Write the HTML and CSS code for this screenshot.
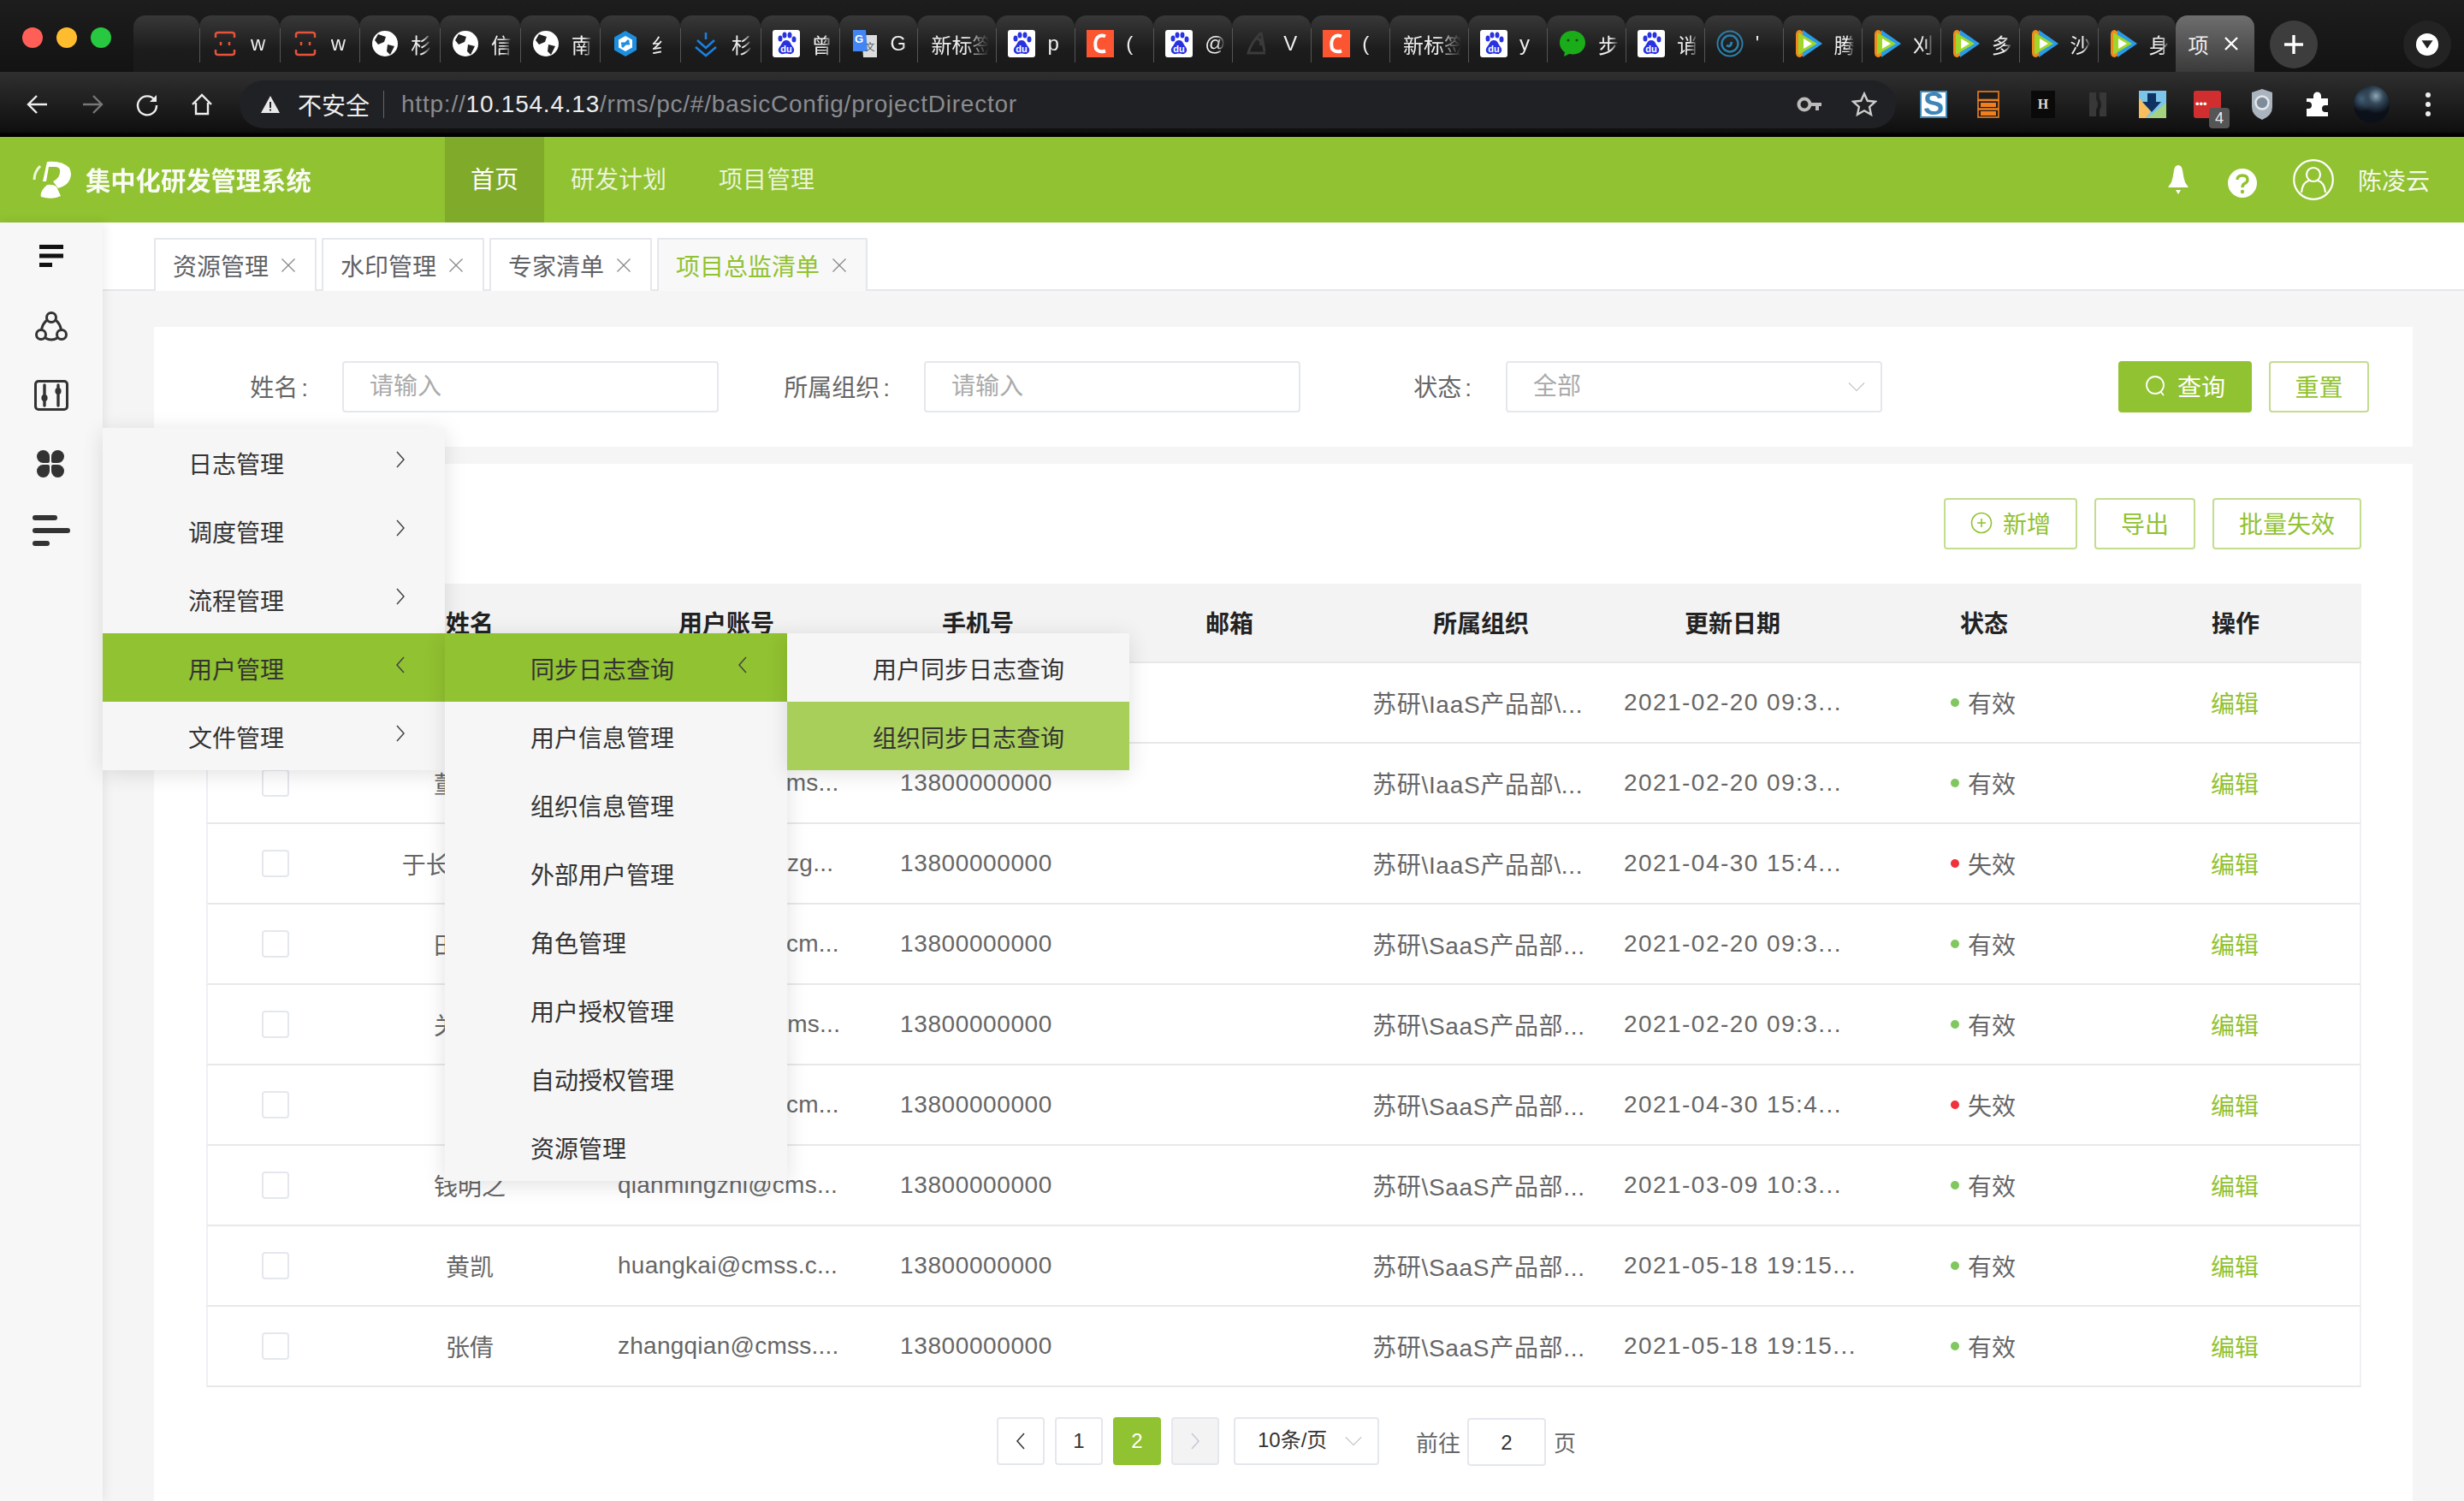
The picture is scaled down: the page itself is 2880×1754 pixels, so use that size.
FILE: index.html
```html
<!DOCTYPE html>
<html lang="zh-CN">
<head>
<meta charset="utf-8">
<title>项目总监清单</title>
<link rel="stylesheet" href="styles.css">
</head>
<body>
<svg class="defs" aria-hidden="true">
  <symbol id="i-mail" viewBox="0 0 32 32"><path d="M5 9V5.500Q5 3 8 3H24Q27 3 27 5.500V9M5 23V26.500Q5 29 8 29H24Q27 29 27 26.500V23" fill="none" stroke="#e5533d" stroke-width="2.500"/><path d="M11 14v4M21 14v4" stroke="#e5533d" stroke-width="2.500"/></symbol>
  <symbol id="i-globe" viewBox="0 0 32 32"><circle cx="16" cy="16" r="15" fill="#fff"/><path d="M8 5l9 3-2 6-7 3-4-5zM19 17l8 2-5 10-4-4z" fill="#222"/></symbol>
  <symbol id="i-hex" viewBox="0 0 32 32"><path d="M16 1L29 8.500V23.500L16 31L3 23.500V8.500z" fill="#1d8fe0"/><path d="M16 7L24 11.500V20.500L16 25L8 20.500V11.500z" fill="#fff"/><path d="M11 16h10M20 12l-8 8" stroke="#1d8fe0" stroke-width="3"/></symbol>
  <symbol id="i-down" viewBox="0 0 32 32"><path d="M16 3v8M6 12l10 9 10-9M4 20l12 10 12-10" fill="none" stroke="#1a7fe0" stroke-width="2.600"/></symbol>
  <symbol id="i-baidu" viewBox="0 0 32 32"><rect width="32" height="32" rx="3" fill="#fff"/><ellipse cx="9" cy="10" rx="2.500" ry="3.500" fill="#2932e1"/><ellipse cx="14" cy="6" rx="2.500" ry="3.500" fill="#2932e1"/><ellipse cx="20" cy="6" rx="2.500" ry="3.500" fill="#2932e1"/><ellipse cx="25" cy="11" rx="2.500" ry="3.500" fill="#2932e1"/><path d="M16 12c-5 0-5 5-8 8-3 4 0 9 5 8 2-.6 4-.6 6 0 5 1 8-4 5-8-3-3-3-8-8-8z" fill="#2932e1"/><text x="16" y="26" class="du">du</text></symbol>
  <symbol id="i-trans" viewBox="0 0 32 32"><path d="M12 6H30V32H14z" fill="#ddd"/><path d="M2 0H17L19 25H2z" fill="#4285f4"/><text x="9" y="15" class="gt">G</text><text x="22" y="24" class="gt2">文</text></symbol>
  <symbol id="i-c" viewBox="0 0 32 32"><rect width="32" height="32" fill="#fc5531"/><path d="M22 7.500Q16 5 12.500 9T11 22Q15 27 22 24.500" fill="none" stroke="#fff" stroke-width="4"/></symbol>
  <symbol id="i-dark" viewBox="0 0 32 32"><path d="M20 3c-6 6-13 16-15 24h20M20 3l4 22M14 10c5 0 7 4 5 8" fill="none" stroke="#3b3b3b" stroke-width="3"/></symbol>
  <symbol id="i-wechat" viewBox="0 0 32 32"><path d="M16 1C7 1 1 7 1 15c0 5 3 9 6 11l-1 5 6-3c1 .3 3 .5 4 .5 9 0 15-6 15-13.500S25 1 16 1z" fill="#1aad19"/><circle cx="11" cy="12" r="1.600" fill="#14500f"/><circle cx="21" cy="12" r="1.600" fill="#14500f"/></symbol>
  <symbol id="i-ring" viewBox="0 0 32 32"><circle cx="16" cy="16" r="14.500" fill="none" stroke="#2c7ea8" stroke-width="2"/><circle cx="16" cy="16" r="9.500" fill="none" stroke="#2c7ea8" stroke-width="2.500"/><path d="M12 18q5 3 6-4" fill="none" stroke="#2c7ea8" stroke-width="3"/></symbol>
  <symbol id="i-play" viewBox="0 0 32 32"><path d="M6 0C2 0 1 3 1 6V26C1 29 2 32 6 32L31 16z" fill="#f08a1d"/><path d="M9 0L32 16 9 32z" fill="#2a9be8"/><path d="M4 3L26 16 4 29z" fill="#9ed72a"/><path d="M10 10L20 16 10 22z" fill="#fff"/></symbol>
  <symbol id="i-chev-r" viewBox="0 0 12 22"><path d="M2 2L10 11 2 20" fill="none" stroke="currentColor" stroke-width="1.500"/></symbol>
  <symbol id="i-chev-l" viewBox="0 0 12 22"><path d="M10 2L2 11 10 20" fill="none" stroke="currentColor" stroke-width="1.500"/></symbol>
  <symbol id="i-chev-d" viewBox="0 0 22 12"><path d="M1 1L11 11 21 1" fill="none" stroke="currentColor" stroke-width="1.200"/></symbol>
  <symbol id="i-close" viewBox="0 0 18 18"><path d="M1.500 1.500L16.500 16.500M16.500 1.500L1.500 16.500" stroke="currentColor" stroke-width="1.300"/></symbol>
  <symbol id="i-close-b" viewBox="0 0 18 18"><path d="M2 2L16 16M16 2L2 16" stroke="#fff" stroke-width="2.400"/></symbol>
</svg>

<header class="tabstrip">
  <div class="lights"><i class="light red"></i><i class="light yellow"></i><i class="light green"></i></div>
  <div class="tab tab-blank"></div>
  <div class="tab"><svg class="fav"><use href="#i-mail"/></svg><span class="tt">w</span></div>
  <div class="tab"><svg class="fav"><use href="#i-mail"/></svg><span class="tt">w</span></div>
  <div class="tab"><svg class="fav"><use href="#i-globe"/></svg><span class="tt">杉</span></div>
  <div class="tab"><svg class="fav"><use href="#i-globe"/></svg><span class="tt">信</span></div>
  <div class="tab"><svg class="fav"><use href="#i-globe"/></svg><span class="tt">南</span></div>
  <div class="tab"><svg class="fav"><use href="#i-hex"/></svg><span class="tt">纟</span></div>
  <div class="tab"><svg class="fav"><use href="#i-down"/></svg><span class="tt">杉</span></div>
  <div class="tab tab-n"><svg class="fav"><use href="#i-baidu"/></svg><span class="tt">曾</span></div>
  <div class="tab tab-n"><svg class="fav"><use href="#i-trans"/></svg><span class="tt">G</span></div>
  <div class="tab tab-n"><span class="tt tt-new">新标签</span></div>
  <div class="tab tab-n"><svg class="fav"><use href="#i-baidu"/></svg><span class="tt">p</span></div>
  <div class="tab tab-n"><svg class="fav"><use href="#i-c"/></svg><span class="tt">(</span></div>
  <div class="tab tab-n"><svg class="fav"><use href="#i-baidu"/></svg><span class="tt">@</span></div>
  <div class="tab tab-n"><svg class="fav"><use href="#i-dark"/></svg><span class="tt">V</span></div>
  <div class="tab tab-n"><svg class="fav"><use href="#i-c"/></svg><span class="tt">(</span></div>
  <div class="tab tab-n"><span class="tt tt-new">新标签</span></div>
  <div class="tab tab-n"><svg class="fav"><use href="#i-baidu"/></svg><span class="tt">y</span></div>
  <div class="tab tab-n"><svg class="fav"><use href="#i-wechat"/></svg><span class="tt">步</span></div>
  <div class="tab tab-n"><svg class="fav"><use href="#i-baidu"/></svg><span class="tt">诮</span></div>
  <div class="tab tab-n"><svg class="fav"><use href="#i-ring"/></svg><span class="tt">'</span></div>
  <div class="tab tab-n"><svg class="fav"><use href="#i-play"/></svg><span class="tt">腾</span></div>
  <div class="tab tab-n"><svg class="fav"><use href="#i-play"/></svg><span class="tt">刈</span></div>
  <div class="tab tab-n"><svg class="fav"><use href="#i-play"/></svg><span class="tt">多</span></div>
  <div class="tab tab-n"><svg class="fav"><use href="#i-play"/></svg><span class="tt">沙</span></div>
  <div class="tab tab-n"><svg class="fav"><use href="#i-play"/></svg><span class="tt">身</span></div>
  <div class="tab tab-active"><span class="tt">项</span><svg class="tab-x"><use href="#i-close-b"/></svg></div>
  <div class="newtab"><svg viewBox="0 0 24 24" class="plus"><path d="M12 1v22M1 12h22" stroke="#fff" stroke-width="3.400"/></svg></div>
  <div class="tabsearch"><svg viewBox="0 0 30 30" class="ts"><circle cx="15" cy="15" r="14" fill="#fff"/><path d="M8 10h14l-7 10z" fill="#222"/></svg></div>
</header>

<nav class="toolbar">
  <div class="navbtns">
    <svg viewBox="0 0 28 28" class="nb"><path d="M25 14H4M13 4L3 14l10 10" fill="none" stroke="#eee" stroke-width="2.400"/></svg>
    <svg viewBox="0 0 28 28" class="nb"><path d="M3 14H24M15 4l10 10-10 10" fill="none" stroke="#777" stroke-width="2.400"/></svg>
    <svg viewBox="0 0 28 28" class="nb"><path d="M23 9A11 11 0 1 0 25 15" fill="none" stroke="#eee" stroke-width="2.400"/><path d="M25 3v8h-8z" fill="#eee"/></svg>
    <svg viewBox="0 0 28 28" class="nb"><path d="M3 14L14 3l11 11M7 12v13h14V12" fill="none" stroke="#eee" stroke-width="2.400"/></svg>
  </div>
  <div class="omnibox">
    <svg viewBox="0 0 24 24" class="warn"><path d="M12 2L23 22H1z" fill="#e8e8e8"/><path d="M11 9h2v7h-2zM11 17.500h2v2h-2z" fill="#202124"/></svg>
    <span class="insecure">不安全</span>
    <span class="omni-sep"></span>
    <span class="url">http://<b>10.154.4.13</b>/rms/pc/#/basicConfig/projectDirector</span>
    <svg viewBox="0 0 30 30" class="key"><circle cx="9" cy="15" r="6.500" fill="none" stroke="#bbb" stroke-width="4"/><path d="M15 13h14v4h-3v5h-4v-5h-7z" fill="#bbb"/></svg>
    <svg viewBox="0 0 30 30" class="star"><path d="M15 2.500l3.800 8.300 9 1-6.700 6.100 1.900 8.900L15 22.300l-8 4.500 1.900-8.900L2.200 11.800l9-1z" fill="none" stroke="#ccc" stroke-width="2.400"/></svg>
  </div>
  <div class="exts">
    <span class="ext ext-s">S</span>
    <svg viewBox="0 0 26 32" class="ext-svg ext-or"><g fill="#1c1c1c" stroke="#f07f1e" stroke-width="1.600"><rect x="1" y="1" width="24" height="9.500"/><rect x="1" y="11.500" width="24" height="9.500"/><rect x="1" y="22" width="24" height="9"/></g><rect x="4" y="14" width="18" height="5" fill="#f07f1e"/><rect x="4" y="24" width="18" height="5" fill="#f07f1e"/></svg>
    <span class="ext ext-k">H</span>
    <svg viewBox="0 0 24 32" class="ext-svg ext-dk"><path d="M2 2h8v8q4 6 0 12v8H2zM14 2h8v28h-8v-7q4-7 0-14z" fill="#383838"/></svg>
    <svg viewBox="0 0 32 32" class="ext-svg"><rect width="32" height="32" fill="#7cc4ea"/><path d="M0 8L14 24 8 32H0z" fill="#f8bd5c"/><path d="M32 14V32H10z" fill="#a5d27e"/><path d="M10 3H20V13H26L15 25 4 13H10z" fill="#0e3264"/></svg>
    <span class="ext ext-r"><span class="dots3">•••</span><span class="badge">4</span></span>
    <svg viewBox="0 0 26 38" class="ext-svg ext-shield"><path d="M13 1L25 5V22Q25 32 13 37 1 32 1 22V5z" fill="#aab4bf"/><circle cx="13" cy="17" r="7.500" fill="#7e8c99" stroke="#e3e7ec" stroke-width="2.500"/></svg>
    <svg viewBox="0 0 32 32" class="ext-svg"><path d="M12 6a4.500 4.500 0 0 1 9 0v3h8v8h-3a4 4 0 0 0 0 8h3v5H4v-9h2a4 4 0 0 0 0-8H4V9h8z" fill="#fff"/></svg>
    <span class="avatar"></span>
    <svg viewBox="0 0 8 32" class="more"><circle cx="4" cy="5" r="3" fill="#eee"/><circle cx="4" cy="16" r="3" fill="#eee"/><circle cx="4" cy="27" r="3" fill="#eee"/></svg>
  </div>
</nav>

<div class="appbar">
  <div class="brand">
    <svg viewBox="0 0 47 44" class="logo"><path d="M9 6Q2 13 2 22" fill="none" stroke="#fff" stroke-width="3" opacity=".85"/><path fill-rule="evenodd" d="M17 1Q34-1 43 8q4 8 0 15-3 6-13 9L24 24Q32 20 32 13 33 7 26 7H19L16 24H12z" fill="#fff"/><path d="M17 28Q24 27 28 30L33 41Q24 46 10 42 8 36 17 28z" fill="#fff"/></svg>
    <span class="brand-name">集中化研发管理系统</span>
  </div>
  <div class="mainnav">
    <a class="mn mn-active">首页</a>
    <a class="mn">研发计划</a>
    <a class="mn">项目管理</a>
  </div>
  <div class="userbox">
    <svg viewBox="0 0 30 36" class="bell"><path d="M15 1q4 0 5 6 1 8 3 14l4 6H3l4-6q2-6 3-14 1-6 5-6z" fill="#fff"/><path d="M12 30h6l-3 5z" fill="#fff"/></svg>
    <svg viewBox="0 0 34 34" class="help"><circle cx="17" cy="17" r="17" fill="#fff"/><path d="M11 13q0-5 6-5t6 5q0 3-3.500 4.500Q17 19 17 22" fill="none" stroke="#91c231" stroke-width="3.400"/><circle cx="17" cy="27" r="2.200" fill="#91c231"/></svg>
    <svg viewBox="0 0 48 48" class="user"><circle cx="24" cy="24" r="22.800" fill="none" stroke="#fff" stroke-width="2.200"/><circle cx="24" cy="18" r="8" fill="none" stroke="#fff" stroke-width="2.200"/><path d="M10 39q1-12 9-14M38 39q-1-12-9-14" fill="none" stroke="#fff" stroke-width="2.200"/></svg>
    <span class="username">陈凌云</span>
  </div>
</div>

<div class="app">
  <aside class="sidebar">
    <div class="si si-a"><svg viewBox="0 0 28 26" class="si1"><path d="M0 0H28V5H0zM0 10.500H28V15.500H0zM0 21H15V26H0z" fill="#111"/></svg></div>
    <div class="si si-b"><svg viewBox="0 0 38 36" class="si2"><g fill="none" stroke="#333" stroke-width="3"><circle cx="19" cy="7" r="5.500"/><circle cx="7" cy="27" r="5.500"/><circle cx="31" cy="27" r="5.500"/><path d="M14 10Q9 14 7.500 21M24 10Q29 14 30.500 21M12 31Q19 35 26 31"/></g></svg></div>
    <div class="si si-b"><svg viewBox="0 0 40 36" class="si3"><rect x="1.500" y="1.500" width="37" height="33" rx="3.500" fill="none" stroke="#333" stroke-width="3"/><path d="M12 6v24M28 6v24" stroke="#333" stroke-width="3.400" stroke-linecap="round"/><ellipse cx="12" cy="21" rx="3.600" ry="4" fill="#333"/><ellipse cx="28" cy="13" rx="3.600" ry="4" fill="#333"/></svg></div>
    <div class="si si-c"><svg viewBox="0 0 32 32" class="si4"><g fill="#333"><path d="M0 7.500A7.500 7.500 0 0 1 15 7.500V13Q15 15 13 15H7.500A7.500 7.500 0 0 1 0 7.500z"/><path d="M32 7.500A7.500 7.500 0 0 0 17 7.500V13Q17 15 19 15H24.500A7.500 7.500 0 0 0 32 7.500z"/><path d="M0 24.500A7.500 7.500 0 0 0 15 24.500V19Q15 17 13 17H7.500A7.500 7.500 0 0 0 0 24.500z"/><path d="M32 24.500A7.500 7.500 0 0 1 17 24.500V19Q17 17 19 17H24.500A7.500 7.500 0 0 1 32 24.500z"/></g></svg></div>
    <div class="si"><svg viewBox="0 0 44 36" class="si5"><g fill="#333"><rect width="29" height="6" rx="3"/><rect y="15" width="44" height="6" rx="3"/><rect y="30" width="20" height="6" rx="3"/></g></svg></div>
  </aside>

  <main class="main">
    <div class="pagetabs">
      <div class="ptab">资源管理<svg class="px"><use href="#i-close"/></svg></div>
      <div class="ptab">水印管理<svg class="px"><use href="#i-close"/></svg></div>
      <div class="ptab">专家清单<svg class="px"><use href="#i-close"/></svg></div>
      <div class="ptab ptab-active">项目总监清单<svg class="px"><use href="#i-close"/></svg></div>
    </div>

    <div class="content">
      <section class="card card-search">
        <label class="flabel flabel-first">姓名<span class="colon">:</span></label>
        <div class="finput">请输入</div>
        <label class="flabel">所属组织<span class="colon">:</span></label>
        <div class="finput">请输入</div>
        <label class="flabel">状态<span class="colon">:</span></label>
        <div class="finput fselect">全部<svg class="sel-arrow"><use href="#i-chev-d"/></svg></div>
        <div class="search-btns">
          <button class="btn btn-primary"><svg viewBox="0 0 26 26" class="btn-ic"><circle cx="12" cy="12" r="10" fill="none" stroke="#fff" stroke-width="1.800"/><path d="M18 19l4 5" stroke="#fff" stroke-width="1.800"/></svg>查询</button>
          <button class="btn btn-reset">重置</button>
        </div>
      </section>

      <section class="card card-table">
        <div class="actions">
          <button class="btn btn-add"><svg viewBox="0 0 26 26" class="btn-ic"><circle cx="13" cy="13" r="11.500" fill="none" stroke="#91c231" stroke-width="1.600"/><path d="M13 8v10M8 13h10" stroke="#91c231" stroke-width="1.600"/></svg>新增</button>
          <button class="btn btn-export">导出</button>
          <button class="btn btn-batch">批量失效</button>
        </div>

        <div class="table">
          <div class="row row-head"><span></span><span>姓名</span><span>用户账号</span><span>手机号</span><span>邮箱</span><span>所属组织</span><span>更新日期</span><span>状态</span><span>操作</span></div>

          <div class="row"><span class="cb-cell"><i class="cb"></i></span><span>张明</span><span class="tr acc">zhangming@cms...</span><span class="num">13800000000</span><span></span><span class="tr org">苏研\IaaS产品部\...</span><span class="tr date">2021-02-20 09:3...</span><span class="st"><i class="dot ok"></i>有效</span><span class="edit">编辑</span></div>
          <div class="row"><span class="cb-cell"><i class="cb"></i></span><span>董晓军</span><span class="tr acc">dongxiaojun@cms...</span><span class="num">13800000000</span><span></span><span class="tr org">苏研\IaaS产品部\...</span><span class="tr date">2021-02-20 09:3...</span><span class="st"><i class="dot ok"></i>有效</span><span class="edit">编辑</span></div>
          <div class="row"><span class="cb-cell"><i class="cb"></i></span><span>于长江(外协)</span><span class="tr acc">yuchangjiangxuzg...</span><span class="num">13800000000</span><span></span><span class="tr org">苏研\IaaS产品部\...</span><span class="tr date">2021-04-30 15:4...</span><span class="st"><i class="dot bad"></i>失效</span><span class="edit">编辑</span></div>
          <div class="row"><span class="cb-cell"><i class="cb"></i></span><span>田晓明</span><span class="tr acc">tian.xiaoming@cm...</span><span class="num">13800000000</span><span></span><span class="tr org">苏研\SaaS产品部...</span><span class="tr date">2021-02-20 09:3...</span><span class="st"><i class="dot ok"></i>有效</span><span class="edit">编辑</span></div>
          <div class="row"><span class="cb-cell"><i class="cb"></i></span><span>关晓东</span><span class="tr acc">guan.xiaodo@cms...</span><span class="num">13800000000</span><span></span><span class="tr org">苏研\SaaS产品部...</span><span class="tr date">2021-02-20 09:3...</span><span class="st"><i class="dot ok"></i>有效</span><span class="edit">编辑</span></div>
          <div class="row"><span class="cb-cell"><i class="cb"></i></span><span>李强</span><span class="tr acc">liqiangqiangg@cm...</span><span class="num">13800000000</span><span></span><span class="tr org">苏研\SaaS产品部...</span><span class="tr date">2021-04-30 15:4...</span><span class="st"><i class="dot bad"></i>失效</span><span class="edit">编辑</span></div>
          <div class="row"><span class="cb-cell"><i class="cb"></i></span><span>钱明之</span><span class="tr acc">qianmingzhi@cms...</span><span class="num">13800000000</span><span></span><span class="tr org">苏研\SaaS产品部...</span><span class="tr date">2021-03-09 10:3...</span><span class="st"><i class="dot ok"></i>有效</span><span class="edit">编辑</span></div>
          <div class="row"><span class="cb-cell"><i class="cb"></i></span><span>黄凯</span><span class="tr acc">huangkai@cmss.c...</span><span class="num">13800000000</span><span></span><span class="tr org">苏研\SaaS产品部...</span><span class="tr date">2021-05-18 19:15...</span><span class="st"><i class="dot ok"></i>有效</span><span class="edit">编辑</span></div>
          <div class="row"><span class="cb-cell"><i class="cb"></i></span><span>张倩</span><span class="tr acc">zhangqian@cmss....</span><span class="num">13800000000</span><span></span><span class="tr org">苏研\SaaS产品部...</span><span class="tr date">2021-05-18 19:15...</span><span class="st"><i class="dot ok"></i>有效</span><span class="edit">编辑</span></div>
        </div>

        <div class="pager">
          <span class="pg pg-prev"><svg class="pg-ar"><use href="#i-chev-l"/></svg></span>
          <span class="pg">1</span>
          <span class="pg pg-on">2</span>
          <span class="pg pg-next"><svg class="pg-ar"><use href="#i-chev-r"/></svg></span>
          <span class="pg-size">10条/页<svg class="sel-arrow"><use href="#i-chev-d"/></svg></span>
          <span class="pg-goto">前往</span>
          <span class="pg-input">2</span>
          <span class="pg-unit">页</span>
        </div>
      </section>
    </div>
  </main>
</div>

<div class="menu menu-1">
  <div class="mi">日志管理<svg class="mi-ar"><use href="#i-chev-r"/></svg></div>
  <div class="mi">调度管理<svg class="mi-ar"><use href="#i-chev-r"/></svg></div>
  <div class="mi">流程管理<svg class="mi-ar"><use href="#i-chev-r"/></svg></div>
  <div class="mi mi-on">用户管理<svg class="mi-ar"><use href="#i-chev-l"/></svg></div>
  <div class="mi">文件管理<svg class="mi-ar"><use href="#i-chev-r"/></svg></div>
</div>
<div class="menu menu-2">
  <div class="mi mi-on">同步日志查询<svg class="mi-ar"><use href="#i-chev-l"/></svg></div>
  <div class="mi">用户信息管理</div>
  <div class="mi">组织信息管理</div>
  <div class="mi">外部用户管理</div>
  <div class="mi">角色管理</div>
  <div class="mi">用户授权管理</div>
  <div class="mi">自动授权管理</div>
  <div class="mi">资源管理</div>
</div>
<div class="menu menu-3">
  <div class="mi">用户同步日志查询</div>
  <div class="mi mi-hover">组织同步日志查询</div>
</div>
</body>
</html>
```

FILE: styles.css
```css
* { box-sizing: border-box; }
html, body { margin: 0; padding: 0; }
body {
  width: 2880px;
  height: 1754px;
  overflow: hidden;
  position: relative;
  background: #f5f5f5;
  font-family: "Liberation Sans", "Noto Sans CJK SC", sans-serif;
  font-size: 28px;
  color: #666;
}
.defs { display: none; }
.du { font: bold 11px "Liberation Sans", sans-serif; fill: #fff; text-anchor: middle; }
.gt { font: bold 13px "Liberation Sans", sans-serif; fill: #fff; text-anchor: middle; }
.gt2 { font: 11px "Noto Sans CJK SC", sans-serif; fill: #555; text-anchor: middle; }

/* browser tab strip */
.tabstrip {
  height: 84px;
  display: flex;
  align-items: flex-end;
  background: linear-gradient(#1d1d1d, #131313);
  padding-left: 156px;
  position: relative;
}
.lights { position: absolute; left: 26px; top: 32px; display: flex; gap: 16px; }
.light { width: 24px; height: 24px; border-radius: 50%; display: block; }
.red { background: #ff5f57; }
.yellow { background: #febc2e; }
.green { background: #28c840; }
.tab {
  width: 93.670px;
  height: 66px;
  flex: none;
  display: flex;
  align-items: center;
  gap: 14px;
  padding: 0 0 0 14px;
  overflow: hidden;
  position: relative;
  color: #eee;
  font-size: 24px;
  border-radius: 14px 14px 0 0;
  background: linear-gradient(#383838, #1c1c1c 60%, #191919);
}
.tab::before {
  content: "";
  position: absolute;
  left: 0;
  top: 15px;
  height: 40px;
  width: 1px;
  background: #555;
}
.tab-n { width: 91.950px; }
.tab-blank { width: 77px; }
.tab-blank::before, .tab-active::before { display: none; }
.fav { width: 32px; height: 32px; flex: none; }
.tt {
  white-space: nowrap;
  flex: none;
  width: 24px;
  overflow: hidden;
  -webkit-mask-image: linear-gradient(90deg, #000 60%, transparent);
  mask-image: linear-gradient(90deg, #000 60%, transparent);
}
.tt-new { width: 68px; margin-left: 2px; }
.tab-active {
  width: 92px;
  height: 66px;
  background: linear-gradient(#6e6e6e, #575757 45%, #3a3a3a);
  gap: 18px;
  padding-left: 14px;
}
.tab-active .tt { -webkit-mask-image: none; mask-image: none; }
.tab-x { width: 18px; height: 18px; flex: none; }
.newtab {
  width: 56px;
  height: 56px;
  border-radius: 50%;
  background: #3d3d3d;
  margin: 0 0 4px 18px;
  display: flex;
  align-items: center;
  justify-content: center;
  flex: none;
}
.plus { width: 24px; height: 24px; }
.tabsearch {
  width: 56px;
  height: 56px;
  border-radius: 50%;
  background: #232323;
  margin: 0 0 4px 100px;
  display: flex;
  align-items: center;
  justify-content: center;
  flex: none;
}
.ts { width: 28px; height: 28px; }

/* browser toolbar */
.toolbar {
  height: 76px;
  display: flex;
  align-items: flex-start;
  padding-top: 10px;
  background: linear-gradient(#2f2f2f, #1c1c1c 55%, #0f0f0f 92%, #000 96%);
}
.navbtns { width: 280px; height: 56px; display: flex; align-items: center; gap: 36px; padding-left: 30px; flex: none; }
.nb { width: 28px; height: 30px; flex: none; }
.omnibox {
  width: 1936px;
  height: 56px;
  border-radius: 28px;
  background: #202124;
  display: flex;
  align-items: center;
  padding: 0 22px 0 24px;
  flex: none;
}
.warn { width: 24px; height: 24px; flex: none; margin-right: 20px; }
.insecure { color: #eee; font-size: 28px; flex: none; }
.omni-sep { width: 1px; height: 32px; background: #666; margin: 0 20px 0 16px; flex: none; }
.url { color: #8a8c90; font-size: 28px; letter-spacing: .78px; flex: none; white-space: nowrap; }
.url b { color: #eee; font-weight: 400; }
.key { width: 30px; height: 30px; margin-left: auto; margin-right: 34px; }
.star { width: 30px; height: 30px; }
.exts { display: flex; align-items: center; height: 56px; padding-left: 28px; gap: 32px; flex: none; }
.ext { width: 32px; height: 32px; flex: none; display: block; position: relative; }
.ext-svg { width: 32px; height: 32px; flex: none; }
.ext-s {
  background: #fff;
  border: 2px solid #3d86b8;
  color: #3d86b8;
  font: bold 36px/28px "Liberation Sans", sans-serif;
  text-align: center;
  overflow: hidden;
}
.ext-or { width: 26px; margin: 0 3px; }
.ext-k { background: #0a0a0a; width: 28px; margin: 0 2px; color: #ddd; font: bold 16px/32px "Liberation Serif", serif; text-align: center; }
.ext-dk { width: 24px; margin: 0 4px; }
.ext-r { background: #d12f2f; border-radius: 3px; }
.dots3 { color: #fff; font-size: 13px; line-height: 32px; display: block; padding-left: 2px; white-space: nowrap; overflow: hidden; }
.badge {
  position: absolute;
  left: 18px;
  top: 20px;
  width: 24px;
  height: 24px;
  background: #555;
  border-radius: 4px;
  color: #eee;
  font-size: 18px;
  line-height: 24px;
  text-align: center;
}
.ext-shield { height: 38px; width: 26px; margin: 0 3px; }
.avatar {
  width: 42px;
  height: 44px;
  border-radius: 50%;
  flex: none;
  margin: 0 -5px;
  background:
    radial-gradient(circle at 62% 28%, #8fa7b8 0, #34495a 22%, transparent 50%),
    radial-gradient(circle at 25% 35%, #4a6a86 0, transparent 35%),
    #0c1119;
}
.more { width: 8px; height: 32px; flex: none; margin-left: 14px; }

/* app header */
.appbar {
  height: 100px;
  background: #91c231;
  display: flex;
  align-items: stretch;
  color: #fff;
}
.brand { width: 520px; display: flex; align-items: center; padding-left: 38px; flex: none; }
.logo { width: 47px; height: 44px; margin-right: 15px; flex: none; filter: blur(.4px); }
.brand-name {
  font-size: 29.300px;
  font-weight: 700;
  color: #fff;
  opacity: .95;
  white-space: nowrap;
  filter: blur(.5px);
  margin-top: -2px;
}
.mainnav { display: flex; align-items: stretch; }
.mn { padding: 2px 30px 0; line-height: 98px; font-size: 28px; color: rgba(255,255,255,.82); }
.mn-active { background: #80ab2a; color: #fff; }
.mn + .mn:not(.mn-active) { margin-left: 1px; }
.userbox { margin-left: auto; display: flex; align-items: center; padding-right: 40px; }
.bell { width: 32px; height: 36px; margin-right: 42px; }
.help { width: 34px; height: 34px; margin-right: 42px; transform: translateY(4px); }
.user { width: 48px; height: 48px; margin-right: 28px; }
.username { font-size: 28px; color: rgba(255,255,255,.92); }

/* app layout */
.app { display: flex; height: 1494px; }
.sidebar {
  width: 120px;
  flex: none;
  background: #f7f7f7;
  box-shadow: 2px 0 12px rgba(0,0,0,.08);
  position: relative;
  z-index: 2;
}
.si { height: 80px; display: flex; align-items: center; justify-content: center; }
.si-a { padding-bottom: 2px; }
.si-b { padding-top: 3px; padding-right: 1px; }
.si-c { padding-top: 4px; padding-right: 2px; }
.si1 { width: 28px; height: 26px; }
.si2 { width: 38px; height: 36px; }
.si3 { width: 40px; height: 36px; }
.si4 { width: 32px; height: 32px; }
.si5 { width: 44px; height: 36px; }
.main { flex: 1; min-width: 0; display: flex; flex-direction: column; }

.pagetabs {
  height: 80px;
  background: #fff;
  border-bottom: 2px solid #e4e7ed;
  display: flex;
  align-items: flex-end;
  gap: 6px;
  padding-left: 60px;
}
.ptab {
  height: 62px;
  width: 190px;
  margin-bottom: -2px;
  border: 2px solid #e4e7ed;
  border-bottom: 0;
  background: #fff;
  display: flex;
  align-items: center;
  padding-left: 20px;
  color: #606266;
  border-radius: 2px 2px 0 0;
  white-space: nowrap;
}
.ptab-active { width: 246px; color: #91c231; background: #f8f8f8; }
.px { width: 18px; height: 18px; color: #888; margin-left: 14px; flex: none; }

.content { flex: 1; padding: 42px 60px 0 60px; display: flex; flex-direction: column; gap: 20px; min-height: 0; }
.card { background: #fff; }
.card-search { height: 140px; display: flex; align-items: center; padding-right: 51px; flex: none; }
.flabel { width: 200px; text-align: right; margin-right: 40px; color: #666; flex: none; padding-bottom: 2px; }
.flabel-first { width: 180px; }
.colon { margin-left: 4px; }
.finput {
  width: 440px;
  height: 60px;
  border: 2px solid #e4e7ed;
  border-radius: 4px;
  padding-left: 30px;
  line-height: 56px;
  color: #aaa;
  flex: none;
  position: relative;
}
.fselect { display: flex; align-items: center; }
.sel-arrow { width: 20px; height: 12px; color: #bbb; position: absolute; right: 18px; top: 50%; margin-top: -6px; }
.search-btns { margin-left: auto; display: flex; gap: 20px; }
.btn {
  height: 60px;
  background: #fff;
  border: 2px solid #c3dd8e;
  border-radius: 4px;
  color: #91c231;
  font: inherit;
  font-size: 28px;
  padding: 0 0 2px;
  display: flex;
  align-items: center;
  justify-content: center;
}
.btn-ic { width: 26px; height: 26px; margin-right: 12px; flex: none; }
.btn-primary { width: 156px; background: #91c231; border-color: #91c231; color: #fff; }
.btn-reset { width: 117px; }
.card-table { flex: 1; min-height: 0; }
.actions { display: flex; justify-content: flex-end; gap: 20px; padding: 40px 60px 40px 0; }
.btn-add { width: 156px; }
.btn-export { width: 118px; }
.btn-batch { width: 174px; }

.table { margin-left: 61px; width: 2519px; }
.row {
  height: 94px;
  display: grid;
  grid-template-columns: 153px 306px repeat(6, 294px) 292px;
  align-items: center;
  border-bottom: 2px solid #e8e8e8;
  border-left: 2px solid #eef0f4;
  border-right: 2px solid #eef0f4;
  color: #666;
  text-align: center;
}
.row-head {
  height: 93px;
  grid-template-columns: 155px 306px repeat(7, 294px);
  background: #f3f3f3;
  color: #222;
  font-weight: 700;
  border-left: 0;
  border-right: 0;
  padding-bottom: 2px;
}
.row > span { white-space: nowrap; overflow: hidden; min-width: 0; }
.tr { text-align: left; padding-left: 20px; }
.num { letter-spacing: .6px; transform: translateX(-2px); }
.acc { letter-spacing: .25px; }
.org { letter-spacing: .7px; }
.date { letter-spacing: 1.450px; }
.cb-cell { display: flex; padding-left: 63px; }
.cb { width: 32px; height: 32px; display: block; border: 2px solid #e4e7ed; border-radius: 4px; background: #fff; }
.st { display: flex; align-items: center; padding-left: 108px; }
.dot { width: 10px; height: 10px; border-radius: 50%; margin-right: 10px; flex: none; }
.ok { background: #7fc75e; }
.bad { background: #f0323c; }
.edit { color: #91c231; }

.pager { display: flex; align-items: center; padding: 35px 0 0 985px; color: #666; font-size: 24px; }
.pg {
  width: 56px;
  height: 56px;
  border: 2px solid #e4e7ed;
  border-radius: 4px;
  color: #333;
  display: flex;
  align-items: center;
  justify-content: center;
  margin-right: 12px;
  background: #fff;
  flex: none;
}
.pg-on { background: #91c231; border-color: #91c231; color: #fff; }
.pg-next { background: #f3f3f4; color: #c4c9d2; margin-right: 17px; }
.pg-ar { width: 12px; height: 22px; }
.pg-size {
  width: 170px;
  height: 56px;
  border: 2px solid #e4e7ed;
  border-radius: 4px;
  color: #333;
  padding-left: 26px;
  line-height: 50px;
  position: relative;
  flex: none;
}
.pg-goto { margin-left: 43px; font-size: 26px; width: 60px; flex: none; }
.pg-input {
  width: 92px;
  height: 56px;
  border: 2px solid #e4e7ed;
  border-radius: 4px;
  color: #333;
  text-align: center;
  line-height: 54px;
  flex: none;
  transform: translateY(1px);
}
.pg-unit { margin-left: 9px; font-size: 26px; }

/* fly-out menus */
.menu {
  position: absolute;
  width: 400px;
  background: #f6f6f6;
  box-shadow: 0 4px 24px rgba(0,0,0,.12);
  z-index: 5;
  color: #333;
}
.menu-1 { left: 120px; top: 500px; }
.menu-2 { left: 520px; top: 740px; }
.menu-3 { left: 920px; top: 740px; }
.mi {
  height: 80px;
  display: flex;
  align-items: center;
  padding: 2px 0 0 100px;
  position: relative;
}
.mi-on { background: #91c231; }
.mi-hover { background: #a9cf5b; }
.mi-ar { position: absolute; right: 46px; top: 26px; width: 12px; height: 22px; color: #444; }
```
